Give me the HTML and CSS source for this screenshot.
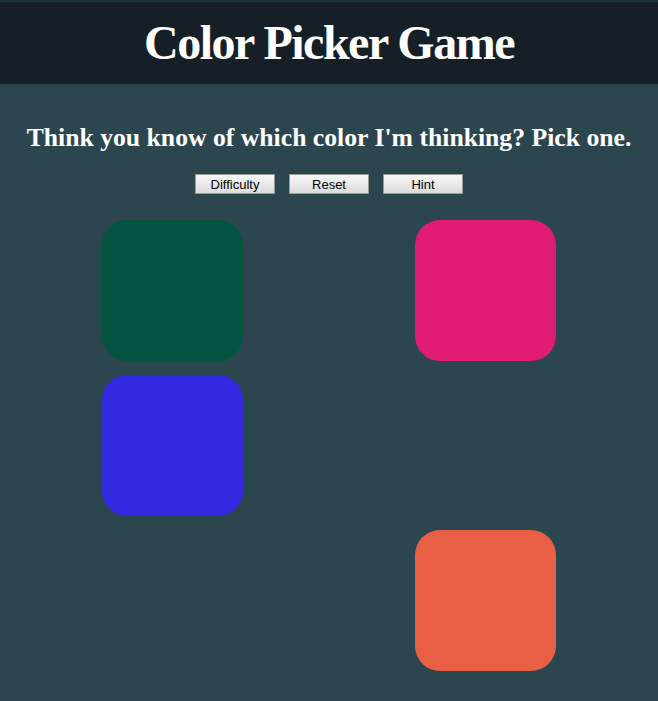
FILE: index.html
```html
<!DOCTYPE html>
<html>
<head>
    <title>Color Picker Game</title>
    <link rel="stylesheet" href="styles.css">
</head>
<body>
    <div class="header">
        <h1>Color Picker Game</h1>
    </div>
    <h2 class="prompt">Think you know of which color I'm thinking? Pick one.</h2>
    <div class="controls">
        <button class="control" id="difficulty">Difficulty</button>
        <button class="control" id="reset">Reset</button>
        <button class="control" id="hint">Hint</button>
    </div>
    <div class="board">
        <div class="square" style="background-color: #035440;"></div>
        <div class="square hidden"></div>
        <div class="square" style="background-color: #e01b72;"></div>
        <div class="square" style="background-color: #3429e0;"></div>
        <div class="square hidden"></div>
        <div class="square hidden"></div>
        <div class="square hidden"></div>
        <div class="square hidden"></div>
        <div class="square" style="background-color: #e95f45;"></div>
    </div>
</body>
</html>
```

FILE: styles.css
```css
body {
    margin: 0;
    background-color: #2c4650;
    font-family: "Liberation Serif", "Times New Roman", serif;
    color: #fff;
}
.header {
    height: 84px;
    background-color: #171f26;
    border-top: 2px solid #1c3338;
    box-sizing: border-box;
}
.header h1 {
    margin: 0;
    font-size: 48px;
    line-height: 82px;
    letter-spacing: -1.5px;
    text-align: center;
}
.prompt {
    margin: 39px 0 0;
    font-size: 25.7px;
    line-height: 30px;
    text-align: center;
}
.controls {
    display: flex;
    justify-content: center;
    gap: 14px;
    margin-top: 21px;
}
.control {
    width: 80px;
    height: 20px;
    padding: 0;
    font-family: "Liberation Sans", Arial, sans-serif;
    font-size: 13px;
    color: #000;
    border: 1px solid #999;
    border-radius: 0;
    background: linear-gradient(#f6f6f6, #dcdcdc);
}
.board {
    display: grid;
    grid-template-columns: repeat(3, 141px);
    justify-content: space-between;
    row-gap: 14px;
    width: 454px;
    margin: 26px auto 0;
}
.square {
    width: 141px;
    height: 141px;
    border-radius: 25px;
}
.hidden {
    visibility: hidden;
}
```
